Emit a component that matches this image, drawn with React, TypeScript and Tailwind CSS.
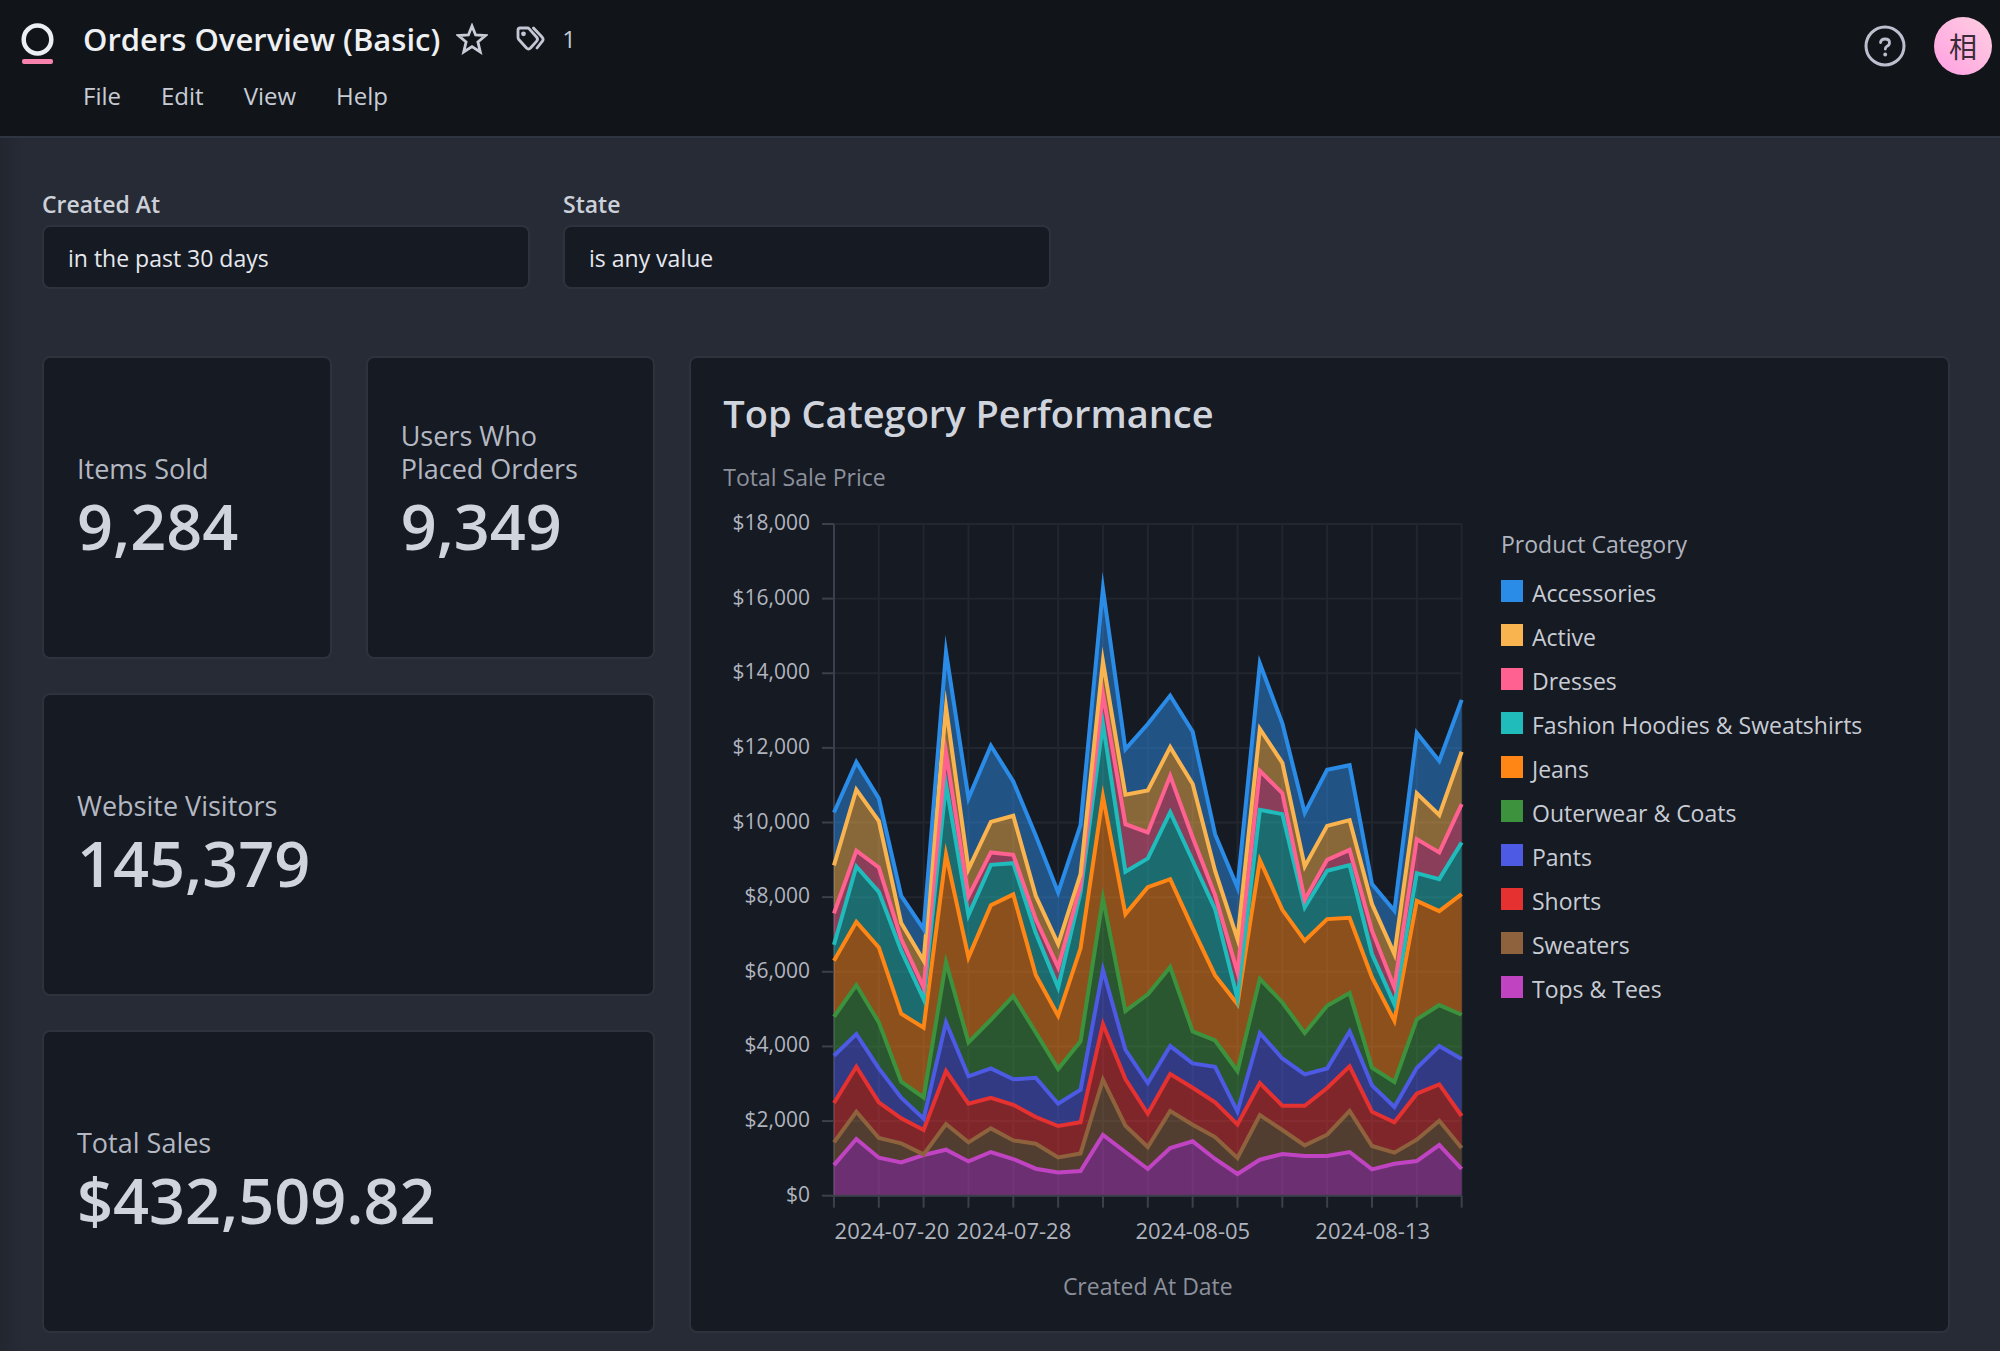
import React, { useState } from "react";

interface ISerie {
  name: string;
  color: string;
  swatch: string;
  // running totals, stacked from the bottom series up
  values: number[];
}

const series: ISerie[] = [
  {
    name: "Accessories",
    color: "#2b8ce8",
    swatch: "bg-[#2b8ce8]",
    values: [10270, 11620, 10644, 8037, 7144, 14574, 10650, 12060, 11100, 9650, 8126, 9930, 16270, 11966, 12640, 13400, 12430, 9689, 8260, 14260, 12660, 10260, 11412, 11537, 8350, 7635, 12400, 11650, 13288],
  },
  {
    name: "Active",
    color: "#fab44f",
    swatch: "bg-[#fab44f]",
    values: [8850, 10880, 10037, 7305, 6296, 13091, 8751, 10019, 10180, 8037, 6742, 8617, 14320, 10743, 10859, 12020, 11030, 8707, 6876, 12510, 11600, 8823, 9912, 10064, 7814, 6474, 10780, 10200, 11895],
  },
  {
    name: "Dresses",
    color: "#ff6190",
    swatch: "bg-[#ff6190]",
    values: [7564, 9243, 8796, 6876, 5581, 11877, 8019, 9198, 9135, 7412, 6117, 8305, 13457, 9957, 9734, 11250, 9600, 8055, 5983, 11386, 10787, 7930, 9001, 9269, 7100, 5581, 9555, 9198, 10493],
  },
  {
    name: "Fashion Hoodies & Sweatshirts",
    color: "#1fbcbb",
    swatch: "bg-[#1fbcbb]",
    values: [6724, 8823, 8144, 6564, 5269, 11028, 7519, 8867, 8912, 7037, 5581, 8126, 12645, 8680, 9037, 10280, 8975, 7680, 5287, 10341, 10225, 7724, 8707, 8859, 6474, 5135, 8644, 8484, 9466],
  },
  {
    name: "Jeans",
    color: "#ff8615",
    swatch: "bg-[#ff8615]",
    values: [6296, 7340, 6653, 4876, 4501, 9144, 6385, 7787, 8073, 5912, 4822, 6626, 10698, 7546, 8269, 8484, 7162, 5903, 5135, 8993, 7662, 6831, 7412, 7448, 5849, 4688, 7903, 7626, 8082],
  },
  {
    name: "Outerwear & Coats",
    color: "#3d933d",
    swatch: "bg-[#3d933d]",
    values: [4795, 5644, 4644, 3054, 2634, 6260, 4108, 4715, 5350, 4376, 3393, 4135, 7966, 4947, 5394, 6126, 4402, 4161, 3340, 5813, 5179, 4358, 5090, 5429, 3429, 3045, 4724, 5108, 4849],
  },
  {
    name: "Pants",
    color: "#4d5ae3",
    swatch: "bg-[#4d5ae3]",
    values: [3751, 4331, 3411, 2625, 2063, 4644, 3197, 3411, 3117, 3161, 2465, 2840, 6055, 3911, 3018, 4010, 3545, 3456, 2259, 4358, 3679, 3250, 3411, 4402, 2956, 2375, 3420, 4010, 3661],
  },
  {
    name: "Shorts",
    color: "#e63131",
    swatch: "bg-[#e63131]",
    values: [2483, 3456, 2500, 2072, 1759, 3340, 2465, 2625, 2438, 2107, 1866, 1965, 4600, 3126, 2197, 3259, 2893, 2500, 1911, 3018, 2411, 2411, 2884, 3465, 2250, 1965, 2733, 2983, 2134],
  },
  {
    name: "Sweaters",
    color: "#8e623d",
    swatch: "bg-[#8e623d]",
    values: [1429, 2250, 1545, 1402, 1107, 1920, 1429, 1804, 1482, 1393, 1027, 1134, 3108, 1875, 1304, 2268, 1902, 1572, 1009, 2161, 1759, 1348, 1634, 2268, 1331, 1152, 1500, 2009, 1277],
  },
  {
    name: "Tops & Tees",
    color: "#c044c2",
    swatch: "bg-[#c044c2]",
    values: [820, 1518, 1018, 893, 1090, 1232, 920, 1170, 982, 723, 625, 661, 1625, 1170, 714, 1277, 1456, 982, 580, 964, 1116, 1063, 1063, 1170, 705, 857, 929, 1357, 714],
  },
];

const yTicks = [0, 2000, 4000, 6000, 8000, 10000, 12000, 14000, 16000, 18000];
const xTicks = Array.from({ length: 15 }, (_, i) => i * 2);
const xLabels = [
  { x: 169, text: "2024-07-20" },
  { x: 291, text: "2024-07-28" },
  { x: 470, text: "2024-08-05" },
  { x: 650, text: "2024-08-13" },
];

const LEFT = 111;
const RIGHT = 739;
const TOP = 19;
const BOTTOM = 691;

const px = (i: number) => LEFT + (i * (RIGHT - LEFT)) / 28;
const py = (v: number) => BOTTOM - (v * (BOTTOM - TOP)) / 18000;

const linePoints = (values: number[]) =>
  values.map((v, i) => `${px(i).toFixed(1)},${py(v).toFixed(1)}`);

function AreaChart() {
  const zero = new Array(29).fill(0);
  const fromBottom = [...series].reverse();

  return (
    <svg
      viewBox="0 0 742 800"
      className="block w-full"
      role="img"
      aria-label="Total Sale Price by Created At Date"
    >
      {yTicks.map((v) => (
        <line key={v} x1={LEFT} x2={RIGHT} y1={py(v)} y2={py(v)} stroke="#22262f" strokeWidth="2" />
      ))}
      {xTicks.map((i) => (
        <line key={i} x1={px(i)} x2={px(i)} y1={TOP} y2={BOTTOM} stroke="#22262f" strokeWidth="2" />
      ))}
      <line x1={LEFT} x2={LEFT} y1={TOP} y2={BOTTOM} stroke="#3c404b" strokeWidth="2" />

      {fromBottom.map((s, i) => {
        const below = i > 0 ? fromBottom[i - 1].values : zero;
        const points = [...linePoints(s.values), ...linePoints(below).reverse()];
        return <polygon key={s.name} points={points.join(" ")} fill={s.color} fillOpacity="0.5" />;
      })}
      {/* lines go over all the fills so they keep their full color */}
      {fromBottom.map((s) => (
        <polyline
          key={s.name}
          points={linePoints(s.values).join(" ")}
          fill="none"
          stroke={s.color}
          strokeWidth="4"
          strokeMiterlimit="10"
        />
      ))}

      <line x1={LEFT} x2={RIGHT} y1={BOTTOM} y2={BOTTOM} stroke="#3c404b" strokeWidth="2" />
      {yTicks.map((v) => (
        <g key={v}>
          <line x1={LEFT - 12} x2={LEFT} y1={py(v)} y2={py(v)} stroke="#3c404b" strokeWidth="2" />
          <text x="87" y={py(v) + 6} textAnchor="end" fontSize="21" fill="#b0b4be">
            {"$" + v.toLocaleString("en-US")}
          </text>
        </g>
      ))}
      {xTicks.map((i) => (
        <line key={i} x1={px(i)} x2={px(i)} y1={BOTTOM} y2={BOTTOM + 12} stroke="#3c404b" strokeWidth="2" />
      ))}
      {xLabels.map((l) => (
        <text key={l.text} x={l.x} y="734" textAnchor="middle" fontSize="22" fill="#b0b4be">
          {l.text}
        </text>
      ))}
      <text x="425" y="790" textAnchor="middle" fontSize="23" fill="#8c909b">
        Created At Date
      </text>
    </svg>
  );
}

function Filter({ id, label, initial }: { id: string; label: string; initial: string }) {
  const [value, setValue] = useState(initial);

  return (
    <div className="flex w-[488px] flex-col">
      <label htmlFor={id} className="text-[23px] leading-[30px] font-semibold text-[#ccd0d8]">
        {label}
      </label>
      <input
        id={id}
        type="text"
        value={value}
        onChange={(e) => setValue(e.target.value)}
        className="mt-1.5 h-16 w-full rounded-lg border-2 border-[#2e323d] bg-[#161a23] px-6 pt-0.5 text-[23px] text-[#e6e8ee] outline-none"
      />
    </div>
  );
}

function Metric({ title, value, className }: { title: string; value: string; className: string }) {
  return (
    <section
      className={`flex h-[303px] flex-col justify-center rounded-lg border-2 border-[#2e323d] bg-[#161a23] px-[33px] pt-0.5 ${className}`}
    >
      {/* one line high, a longer title grows upwards and the value stays in place */}
      <h2 className="flex h-[33px] flex-col justify-end text-[27px] leading-[33px] text-[#b4b8c2]">
        <span>{title}</span>
      </h2>
      <p className="text-[63px] leading-[81px] font-semibold text-[#d0d4dc]">{value}</p>
    </section>
  );
}

function Header() {
  const menu = ["File", "Edit", "View", "Help"];

  return (
    <header className="flex h-[138px] items-start border-b-2 border-[#303641] bg-[#111519]">
      <a href="#" aria-label="Home" className="mt-[22px] ml-[21px] block">
        <svg width="33" height="44" viewBox="0 0 33 44">
          <ellipse cx="16.5" cy="17.5" rx="13.8" ry="14" fill="none" stroke="#eceff3" strokeWidth="4.5" />
          <rect x="1" y="37" width="31" height="5" rx="2" fill="#f783ac" />
        </svg>
      </a>

      <div className="ml-[29px] flex-1">
        <div className="flex h-[78px] items-center">
          <h1 className="text-[31px] font-semibold text-[#eef0f3]">Orders Overview (Basic)</h1>
          <button type="button" aria-label="Favorite" className="ml-4 text-[#c8ccd6]">
            <svg width="32" height="32" viewBox="0 0 32 32" fill="none" stroke="currentColor" strokeWidth="2.8">
              <path d="M16 3 L19.6 12 L29.5 12.6 L21.9 18.9 L24.3 29 L16 23.6 L7.7 29 L10.1 18.9 L2.5 12.6 L12.4 12 Z" />
            </svg>
          </button>
          <button type="button" className="ml-7 flex items-center gap-4 text-[24px] text-[#c3c8d4]">
            <svg width="30" height="26" viewBox="0 0 30 26" fill="none" stroke="currentColor" strokeWidth="2.8" strokeLinecap="round" strokeLinejoin="round">
              <path d="M2 4 Q2 2 4 2 L11.5 2 Q12.5 2 13.2 2.8 L20.5 11 Q22.5 13.2 20.5 15.4 L14.5 22 Q12.5 24 10.5 22 L2.8 13.5 Q2 12.6 2 11.5 Z" />
              <path d="M17.5 2 L26 11 Q28.2 13.3 26 15.7 L21 22" />
              <circle cx="7.5" cy="7.8" r="1" fill="currentColor" />
            </svg>
            <span>1</span>
          </button>
        </div>
        <nav className="flex gap-10 text-[24px] leading-9 text-[#c8ccd6]">
          {menu.map((item) => (
            <button key={item} type="button">
              {item}
            </button>
          ))}
        </nav>
      </div>

      <div className="mt-[17px] mr-2 flex items-center gap-7">
        <button type="button" aria-label="Help" className="text-[#bcc0ce]">
          <svg width="42" height="42" viewBox="0 0 42 42" fill="none" stroke="currentColor" strokeLinecap="round">
            <circle cx="21" cy="21" r="19" strokeWidth="3" />
            <path d="M16.5 17.5 Q17 14 21 14 Q25.5 14 25.5 17.7 Q25.5 20 23 21.3 Q21.3 22.2 21.3 24" strokeWidth="2.8" />
            <circle cx="21.2" cy="29.5" r="1.9" fill="currentColor" stroke="none" />
          </svg>
        </button>
        <button
          type="button"
          className="flex size-[58px] items-center justify-center rounded-full bg-linear-to-tr from-[#ff9fe2] to-[#ffcfe0] font-['Noto_Sans_CJK_SC',sans-serif] text-[28px] leading-none text-[#3a2c38]"
        >
          相
        </button>
      </div>
    </header>
  );
}

export default function App() {
  return (
    <div className="flex min-h-screen flex-col bg-[#272b36] font-['Open_Sans','Noto_Sans',sans-serif]">
      <Header />
      <main className="flex-1 bg-linear-to-r from-[#22262f] to-[#272b36] to-[24px] pt-[51px] pr-[50px] pb-[18px] pl-[42px]">
        <div className="flex flex-wrap gap-[33px]">
          <Filter id="created-at" label="Created At" initial="in the past 30 days" />
          <Filter id="state" label="State" initial="is any value" />
        </div>

        <div className="mt-[67px] grid grid-cols-24 gap-[34px]">
          <Metric title="Items Sold" value="9,284" className="col-span-4" />
          <Metric title="Users Who Placed Orders" value="9,349" className="col-span-4" />

          <section className="col-span-16 row-span-3 rounded-lg border-2 border-[#2e323d] bg-[#161a23] px-8 pt-[31px]">
            <h2 className="text-[38px] leading-[48px] font-semibold text-[#d0d4dc]">
              Top Category Performance
            </h2>
            <h3 className="mt-6 text-[23px] leading-8 text-[#8c909b]">Total Sale Price</h3>
            <div className="mt-3 flex gap-9">
              <div className="flex-1">
                <AreaChart />
              </div>
              <div className="w-[415px] pt-[23px]">
                <h3 className="text-[23px] leading-8 text-[#b0b4be]">Product Category</h3>
                <ul className="mt-[11px]">
                  {series.map((s) => (
                    <li key={s.name} className="flex h-11 items-center gap-[9px] text-[23px] text-[#c8ccd4]">
                      <span className={`mb-1 size-[22px] shrink-0 ${s.swatch}`} />
                      {s.name}
                    </li>
                  ))}
                </ul>
              </div>
            </div>
          </section>

          <Metric title="Website Visitors" value="145,379" className="col-span-8" />
          <Metric title="Total Sales" value="$432,509.82" className="col-span-8" />
        </div>
      </main>
    </div>
  );
}
